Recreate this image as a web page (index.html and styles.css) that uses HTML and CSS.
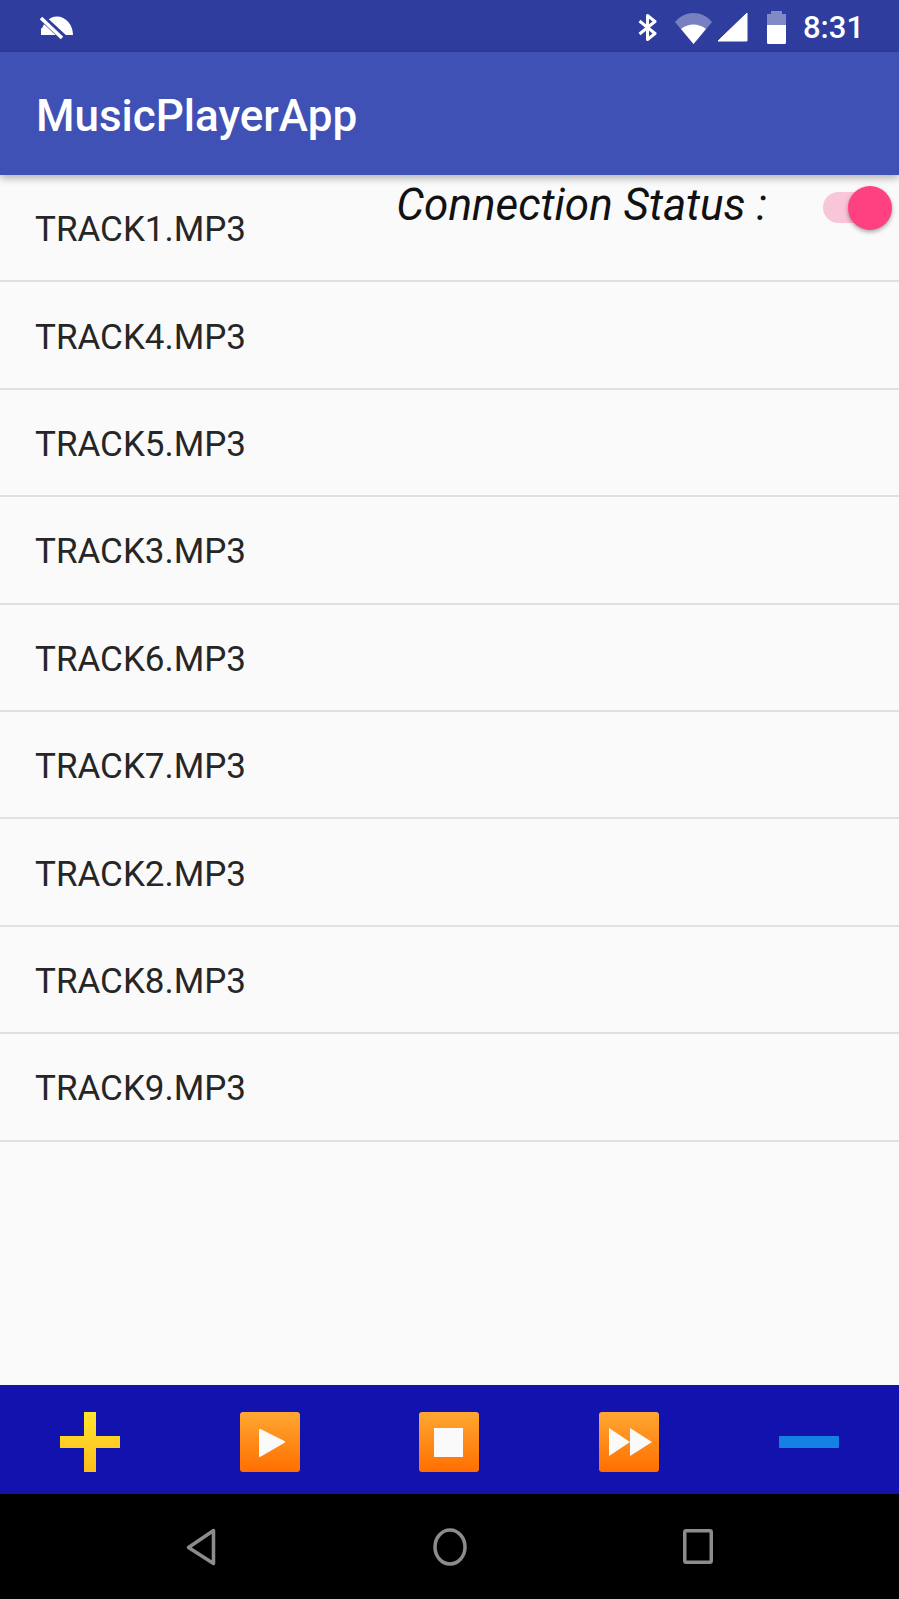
FILE: index.html
```html
<!DOCTYPE html>
<html lang="en">
<head>
    <meta charset="UTF-8">
    <title>MusicPlayerApp</title>
    <link rel="stylesheet" href="styles.css">
</head>
<body>
    <div class="status-bar">
        <svg class="saver-icon" width="33" height="24" viewBox="0 0 33 24">
            <path d="M1 19 A16 18.500 0 0 1 33 19 Z" fill="#fff"/>
            <path d="M-2 -2 L24 22" stroke="#2f3d9e" stroke-width="7" fill="none"/>
            <path d="M1 2 L22 22" stroke="#fff" stroke-width="3.500" fill="none"/>
            <path d="M1 12 L13 19 L1 19 Z" fill="#fff"/>
        </svg>
        <div class="status-right">
            <svg class="bt-icon" width="20" height="27" viewBox="0 0 20 27">
                <path d="M1.500 7 L17 19.500 L9.500 25.500 L9.500 1.500 L17 7.500 L1.500 20" fill="none" stroke="#fff" stroke-width="3" stroke-linejoin="round"/>
            </svg>
            <svg class="wifi-icon" width="37" height="32" viewBox="0 0 37 32">
                <path d="M0 10 C10 -2 27 -2 37 10 L18.500 32 Z" fill="#fff" fill-opacity="0.35"/>
                <path d="M6 17 C13 11 24 11 31 17 L18.500 32 Z" fill="#fff"/>
            </svg>
            <svg class="signal-icon" width="30" height="29" viewBox="0 0 30 29">
                <path d="M0 28 L29 0 L29 28 Z" fill="#fff" stroke="#fff" stroke-width="1" stroke-linejoin="round"/>
            </svg>
            <svg class="battery-icon" width="19" height="33" viewBox="0 0 19 33">
                <path d="M4 0 H15 V3 H19 V14 H0 V3 H4 Z" fill="#fff" fill-opacity="0.4"/>
                <path d="M0 14 H19 V31.500 Q19 33 17.500 33 H1.500 Q0 33 0 31.500 Z" fill="#fff"/>
            </svg>
            <span class="clock">8:31</span>
        </div>
    </div>

    <header class="app-bar">MusicPlayerApp</header>

    <main class="content">
        <ul class="track-list">
            <li class="track">TRACK1.MP3</li>
            <li class="track">TRACK4.MP3</li>
            <li class="track">TRACK5.MP3</li>
            <li class="track">TRACK3.MP3</li>
            <li class="track">TRACK6.MP3</li>
            <li class="track">TRACK7.MP3</li>
            <li class="track">TRACK2.MP3</li>
            <li class="track">TRACK8.MP3</li>
            <li class="track">TRACK9.MP3</li>
        </ul>

        <!-- sits on top of the list -->
        <div class="connection">
            <span class="connection-label">Connection Status :</span>
            <span class="switch"><span class="switch-thumb"></span></span>
        </div>
    </main>

    <div class="controls">
        <button class="control">
            <svg width="60" height="60" viewBox="0 0 60 60">
                <defs>
                    <linearGradient id="yellow" x1="0" y1="0" x2="0" y2="1">
                        <stop offset="0" stop-color="#ffe52e"/>
                        <stop offset="1" stop-color="#fdbd1c"/>
                    </linearGradient>
                </defs>
                <path d="M24 0 H36 V24 H60 V36 H36 V60 H24 V36 H0 V24 H24 Z" fill="url(#yellow)"/>
            </svg>
        </button>
        <button class="control">
            <svg width="60" height="60" viewBox="0 0 60 60">
                <defs>
                    <linearGradient id="orange" x1="0" y1="0" x2="0" y2="1">
                        <stop offset="0" stop-color="#ffa733"/>
                        <stop offset="1" stop-color="#ff6f00"/>
                    </linearGradient>
                </defs>
                <rect width="60" height="60" rx="3" fill="url(#orange)"/>
                <path d="M20 18 L44 30 L20 44 Z" fill="#fafafa" stroke="#fafafa" stroke-width="2" stroke-linejoin="round"/>
            </svg>
        </button>
        <button class="control">
            <svg width="60" height="60" viewBox="0 0 60 60">
                <rect width="60" height="60" rx="3" fill="url(#orange)"/>
                <rect x="15" y="16" width="29" height="29" fill="#fafafa"/>
            </svg>
        </button>
        <button class="control">
            <svg width="60" height="60" viewBox="0 0 60 60">
                <rect width="60" height="60" rx="3" fill="url(#orange)"/>
                <path d="M10 16 L31 30 L10 44 Z M31 16 L53 30 L31 44 Z" fill="#fafafa"/>
            </svg>
        </button>
        <button class="control">
            <svg width="60" height="12" viewBox="0 0 60 12">
                <rect width="60" height="12" rx="1" fill="#1681e4"/>
            </svg>
        </button>
    </div>

    <nav class="nav-bar">
        <svg width="30" height="38" viewBox="0 0 30 38">
            <path d="M27.500 2.500 L2.500 19.500 L27.500 35.500 Z" fill="none" stroke="#8c8c8c" stroke-width="3.500" stroke-linejoin="round"/>
        </svg>
        <svg width="34" height="38" viewBox="0 0 34 38">
            <ellipse cx="17" cy="19" rx="15" ry="17" fill="none" stroke="#8c8c8c" stroke-width="3.500"/>
        </svg>
        <svg width="30" height="35" viewBox="0 0 30 35">
            <rect x="1.750" y="1.750" width="26.500" height="31.500" rx="1.500" fill="none" stroke="#8c8c8c" stroke-width="3.500"/>
        </svg>
    </nav>
</body>
</html>
```

FILE: styles.css
```css
* {
    box-sizing: border-box;
}
body {
    margin: 0;
    height: 1599px;
    display: flex;
    flex-direction: column;
    font-family: Roboto, sans-serif;
    background-color: #fafafa;
    overflow: hidden;
}
svg {
    display: block;
}
.status-bar {
    height: 52px;
    flex: none;
    display: flex;
    justify-content: space-between;
    align-items: center;
    padding: 3px 35px 0 40px;
    background-color: #2f3d9e;
    color: white;
}
.status-right {
    display: flex;
    align-items: center;
}
.bt-icon {
    margin-right: 17px;
}
.wifi-icon {
    margin-right: 6px;
}
.signal-icon {
    margin-right: 19px;
}
.battery-icon {
    margin-right: 17px;
}
.clock {
    font-size: 31px;
    font-weight: 500;
}
.app-bar {
    height: 123px;
    flex: none;
    display: flex;
    align-items: center;
    padding: 4px 36px 0;
    font-size: 44px;
    font-weight: 500;
    color: white;
    background-color: #3f51b5;
    box-shadow: 0 3px 8px rgba(0, 0, 0, 0.3);
    position: relative;
    z-index: 1;
}
.content {
    flex: 1;
    position: relative;
}
.track-list {
    list-style: none;
    margin: 0;
    padding: 0;
}
.track {
    height: 107.4px;
    display: flex;
    align-items: center;
    padding: 4px 35px 0;
    font-size: 35px;
    color: #262626;
    border-bottom: 2px solid #e0e0e0;
}
.connection {
    position: absolute;
    top: 0;
    right: 0;
    left: 0;
    height: 60px;
    display: flex;
    justify-content: flex-end;
    align-items: center;
}
.connection-label {
    font-size: 44px;
    font-style: italic;
    color: #111;
    margin-right: 56px;
}
.switch {
    width: 58px;
    height: 31px;
    margin-top: 4px;
    margin-right: 18px;
    border-radius: 16px;
    background-color: #f9c5d8;
    position: relative;
}
.switch-thumb {
    position: absolute;
    top: -6px;
    right: -11px;
    width: 44px;
    height: 44px;
    border-radius: 50%;
    background-color: #ff4081;
    box-shadow: 0 2px 4px rgba(0, 0, 0, 0.35);
}
.controls {
    height: 109px;
    flex: none;
    display: flex;
    background-color: #1212ae;
}
.control {
    flex: 1;
    display: flex;
    justify-content: center;
    align-items: center;
    padding: 4px 0 0;
    border: none;
    background: none;
}
.nav-bar {
    height: 105px;
    flex: none;
    display: flex;
    align-items: center;
    padding: 0 186px;
    justify-content: space-between;
    background-color: black;
}
```
